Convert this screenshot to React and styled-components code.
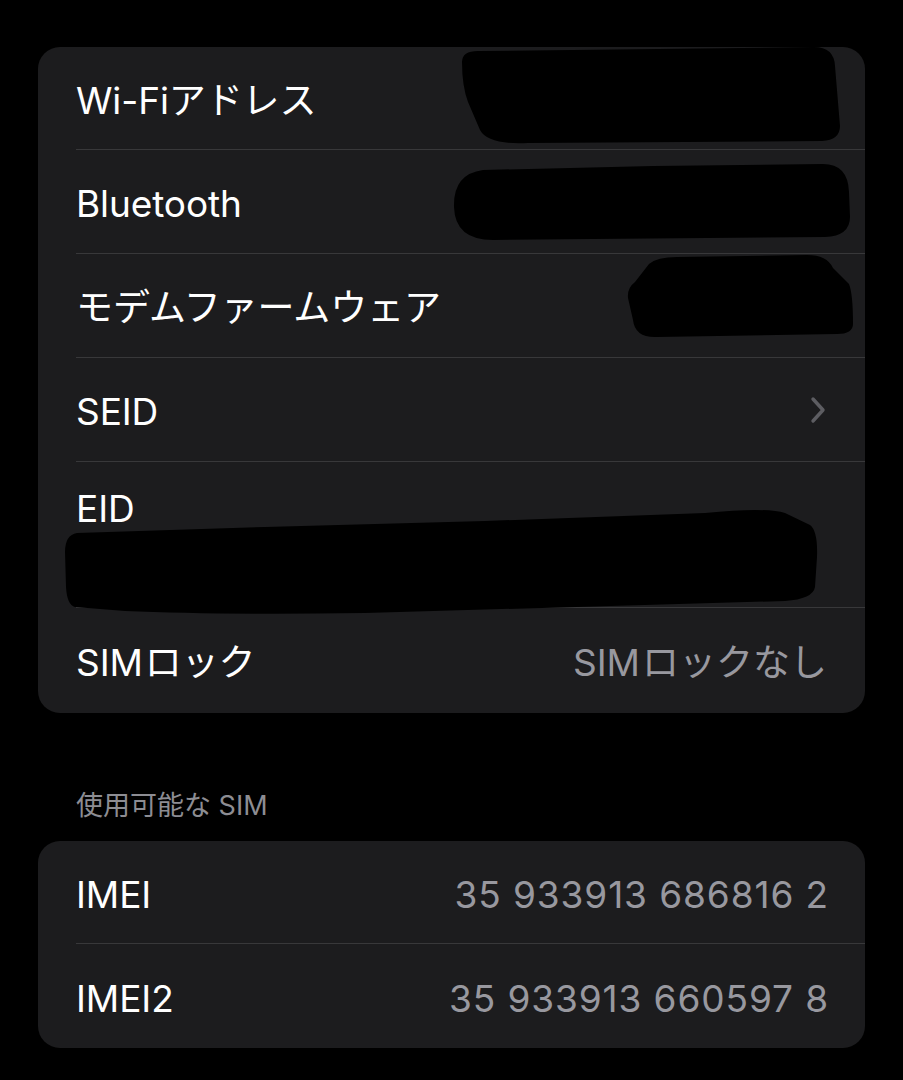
import React from 'react';
import styled, { createGlobalStyle } from 'styled-components';

const GlobalStyle = createGlobalStyle`
  html, body {
    margin: 0;
    padding: 0;
    background: #000;
  }
  body {
    font-family: "Inter", "Noto Sans CJK JP", sans-serif;
    -webkit-font-smoothing: antialiased;
  }
`;

const Page = styled.div`
  background: #000;
  min-height: 1080px;
  padding: 47px 38px 32px;
  box-sizing: border-box;
`;

const Card = styled.div`
  background: #1c1c1e;
  border-radius: 22px;
  overflow: hidden;
`;

const Row = styled.div`
  padding-left: 38px;
`;

const RowInner = styled.div`
  display: flex;
  flex-direction: ${({ stacked }) => (stacked ? 'column' : 'row')};
  align-items: ${({ stacked }) => (stacked ? 'stretch' : 'center')};
  justify-content: space-between;
  height: ${({ h }) => h || 104}px;
  box-sizing: border-box;
  padding-top: ${({ stacked }) => (stacked ? 0 : 5)}px;
  padding-right: 38px;
  border-bottom: ${({ last }) => (last ? 'none' : '1.5px solid #38383a')};
`;

const Label = styled.span`
  color: #fff;
  font-size: 37px;
  letter-spacing: -0.1px;
  line-height: 44px;
  padding-top: ${({ top }) => top || 0}px;
`;

const Value = styled.span`
  color: #98989f;
  font-size: 37px;
  letter-spacing: ${({ digits }) => (digits ? 0.9 : 0)}px;
  margin-right: ${({ digits }) => (digits ? -2 : 0)}px;
  line-height: 44px;
`;

const Latin = styled.span`
  margin-right: 2px;
`;

const BlobSvg = styled.svg`
  display: block;
  flex-shrink: 0;
`;

const Header = styled.div`
  color: #8d8d93;
  font-size: 27px;
  line-height: 34px;
  padding: 76px 0 18px 38px;
`;

const Chevron = styled.svg`
  display: block;
  margin-right: 1px;
  margin-top: -5px;
`;

const Blob = ({ w, h, d, style }) => (
  <BlobSvg width={w} height={h} viewBox={`0 0 ${w} ${h}`} style={style}>
    <path d={d} fill="#000" />
  </BlobSvg>
);

const App = () => (
  <Page>
    <GlobalStyle />
    <Card>
      <Row>
        <RowInner h={103}>
          <Label>Wi-Fiアドレス</Label>
          <Blob
            w={382}
            h={99}
            style={{ marginRight: -13, marginTop: -10 }}
            d="M4 16 Q4 5 20 5 L200 3 L356 1 Q376 1 377 20 L382 80 Q382 94 364 95 L70 97 Q30 99 22 84 L10 56 Q4 40 4 16 Z"
          />
        </RowInner>
      </Row>
      <Row>
        <RowInner>
          <Label>Bluetooth</Label>
          <Blob
            w={397}
            h={79}
            style={{ marginRight: -23, marginTop: -6 }}
            d="M30 8 L200 4 L370 2 Q395 2 396 30 L397 55 Q397 74 372 75 L40 78 Q2 78 1 45 Q0 12 30 8 Z"
          />
        </RowInner>
      </Row>
      <Row>
        <RowInner>
          <Label>モデムファームウェア</Label>
          <Blob
            w={226}
            h={84}
            style={{ marginRight: -26, marginTop: -24 }}
            d="M22 10 Q30 3 50 3 L180 1 Q200 1 206 14 L222 30 Q226 40 226 70 Q226 80 210 80 L30 83 Q8 84 6 66 L1 44 Q0 34 8 28 Z"
          />
        </RowInner>
      </Row>
      <Row>
        <RowInner>
          <Label>SEID</Label>
          <Chevron width="16" height="28" viewBox="0 0 16 28">
            <polyline
              points="3,3 13,14 3,25"
              fill="none"
              stroke="#5d5d62"
              strokeWidth="3.4"
              strokeLinecap="round"
              strokeLinejoin="round"
            />
          </Chevron>
        </RowInner>
      </Row>
      <Row>
        <RowInner stacked h={146}>
          <Label top={25}>EID</Label>
          <Blob
            w={753}
            h={108}
            style={{ marginLeft: -11, marginTop: -24, marginBottom: -4 }}
            d="M12 26 L200 20 L420 14 L640 6 Q700 0 720 6 L745 18 Q753 24 752 50 L750 80 Q748 92 720 94 L300 106 Q150 108 60 104 L10 100 Q2 98 1 80 L0 45 Q0 28 12 26 Z"
          />
        </RowInner>
      </Row>
      <Row>
        <RowInner last h={105}>
          <Label><Latin>SIM</Latin>ロック</Label>
          <Value><Latin>SIM</Latin>ロックなし</Value>
        </RowInner>
      </Row>
    </Card>

    <Header>使用可能な SIM</Header>

    <Card>
      <Row>
        <RowInner h={103}>
          <Label>IMEI</Label>
          <Value digits>35 933913 686816 2</Value>
        </RowInner>
      </Row>
      <Row>
        <RowInner last>
          <Label>IMEI2</Label>
          <Value digits>35 933913 660597 8</Value>
        </RowInner>
      </Row>
    </Card>
  </Page>
);

export default App;
